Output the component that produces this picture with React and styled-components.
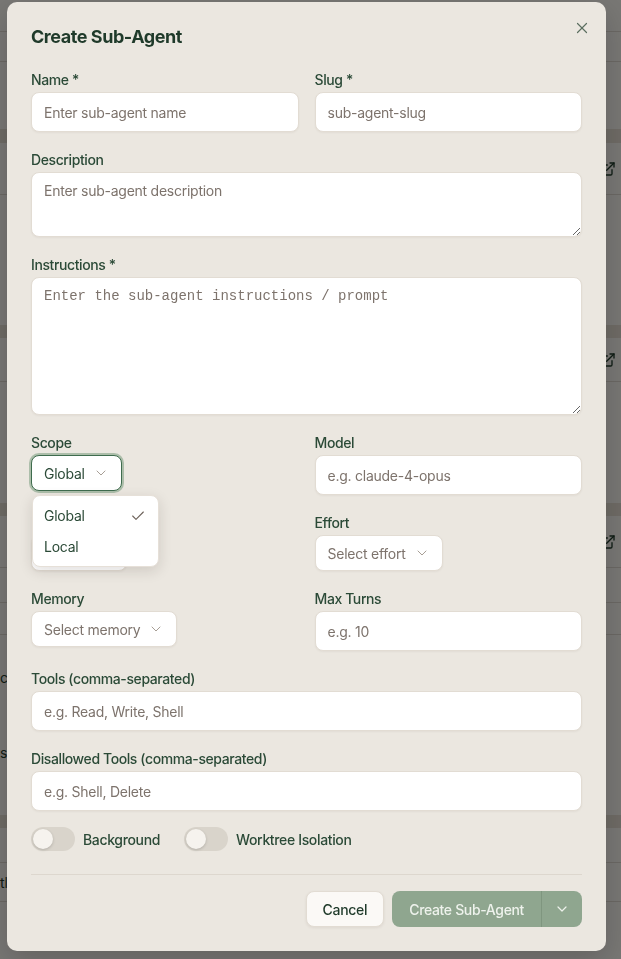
import React from 'react';
import styled, { createGlobalStyle, css } from 'styled-components';
import { X, ChevronDown, Check, ExternalLink } from 'lucide-react';

const GlobalStyle = createGlobalStyle`
  html, body {
    margin: 0;
    padding: 0;
    background: #f1eee9;
    font-family: Inter, "Noto Sans", "Liberation Sans", sans-serif;
  }
  * { box-sizing: border-box; }
`;

/* ---------- page behind the dialog ---------- */

const Page = styled.div`
  display: flex;
  flex-direction: column;
  min-height: 100vh;
`;

const PageRow = styled.div`
  height: ${p => p.$h}px;
  display: flex;
  align-items: center;
  justify-content: space-between;
  font-size: 14px;
  color: #1f3a2a;
  ${p => p.$line && css`border-bottom: 1px solid #d6d0c8;`}
  ${p => p.$band && css`background: #ddd6cb;`}
`;

const RowIcon = styled.span`
  display: flex;
  margin-right: 5px;
  color: #1f3a2a;
`;

const Overlay = styled.div`
  position: fixed;
  inset: 0;
  background: rgba(0, 0, 0, 0.5);
`;

/* ---------- dialog ---------- */

const Dialog = styled.div`
  position: fixed;
  top: 2px;
  left: 7px;
  width: 599px;
  padding: 24px;
  background: #ebe7e0;
  border-radius: 10px;
  box-shadow: 0 10px 30px rgba(0, 0, 0, 0.18);
  letter-spacing: -0.25px;
`;

const Title = styled.h2`
  margin: 0 0 23px;
  font-size: 18px;
  line-height: 21px;
  font-weight: 700;
  color: #1f3a2a;
  letter-spacing: -0.45px;
`;

const CloseButton = styled.button`
  position: absolute;
  top: 17px;
  right: 15px;
  width: 18px;
  height: 18px;
  padding: 0;
  border: 0;
  background: none;
  color: #5b6f60;
  display: flex;
  cursor: pointer;
`;

const Form = styled.div`
  display: flex;
  flex-direction: column;
  gap: 18px;
`;

const TwoCol = styled.div`
  display: grid;
  grid-template-columns: 1fr 1fr;
  column-gap: 16px;
  row-gap: 18px;
`;

const Field = styled.div`
  position: relative;
  display: flex;
  flex-direction: column;
  align-items: ${p => (p.$inline ? 'flex-start' : 'stretch')};
  gap: 2px;
`;

const Label = styled.label`
  font-size: 14px;
  line-height: 20px;
  font-weight: 500;
  color: #2b4a37;
  letter-spacing: -0.4px;
`;

const fieldBox = css`
  background: #fff;
  border: 1px solid #e2dcd3;
  border-radius: 8px;
  box-shadow: 0 1px 2px rgba(60, 40, 20, 0.05);
  font-family: inherit;
  font-size: 14px;
  letter-spacing: -0.25px;
  color: #2b4a37;
  outline: none;
  &::placeholder { color: #7d736c; }
`;

const Input = styled.input`
  ${fieldBox}
  height: 40px;
  width: 100%;
  padding: 0 12px;
`;

const TextArea = styled.textarea`
  ${fieldBox}
  display: block;
  width: 100%;
  height: ${p => p.$h}px;
  padding: 8px 12px;
  line-height: 20px;
  resize: vertical;
  ${p => p.$mono && css`
    font-family: "Liberation Mono", "DejaVu Sans Mono", monospace;
    letter-spacing: 0;
  `}
`;

const SelectTrigger = styled.button`
  ${fieldBox}
  height: 36px;
  display: inline-flex;
  align-items: center;
  gap: 8px;
  padding: 0 12px;
  color: ${p => (p.$value ? '#2b4a37' : '#7d736c')};
  cursor: pointer;
  svg { color: #a79e95; }
  ${p => p.$focused && css`
    border-color: #3f6c4e;
    box-shadow: 0 0 0 2px rgba(95, 140, 105, 0.45);
  `}
`;

const Menu = styled.div`
  position: absolute;
  top: 62px;
  left: 1px;
  width: 127px;
  padding: 4px;
  background: #fff;
  border: 1px solid #e6e0d8;
  border-radius: 8px;
  box-shadow: 0 4px 14px rgba(40, 30, 20, 0.14);
  z-index: 2;
`;

const MenuItem = styled.div`
  height: 31px;
  display: flex;
  align-items: center;
  justify-content: space-between;
  padding: 0 8px 0 7px;
  font-size: 14px;
  color: #2b4a37;
  svg { color: #6b6058; }
`;

const ToggleRow = styled.div`
  display: flex;
  align-items: center;
  gap: 24px;
  margin-top: -2px;
`;

const ToggleItem = styled.label`
  display: inline-flex;
  align-items: center;
  gap: 8px;
  font-size: 14px;
  font-weight: 500;
  letter-spacing: -0.35px;
  color: #2b4a37;
`;

const Switch = styled.span`
  width: 44px;
  height: 24px;
  padding: 2px;
  border-radius: 12px;
  background: ${p => (p.$on ? '#3f6c4e' : '#d9d4cb')};
  display: inline-flex;
  justify-content: ${p => (p.$on ? 'flex-end' : 'flex-start')};
  &::after {
    content: '';
    width: 20px;
    height: 20px;
    border-radius: 50%;
    background: #f6f3ee;
    box-shadow: 0 1px 3px rgba(0, 0, 0, 0.18);
  }
`;

const Footer = styled.div`
  margin-top: 23px;
  padding-top: 16px;
  border-top: 1px solid #ddd7ce;
  display: flex;
  justify-content: flex-end;
  gap: 8px;
`;

const Button = styled.button`
  height: 36px;
  padding: 0 16px;
  border-radius: 8px;
  font-family: inherit;
  font-size: 14px;
  font-weight: 500;
  letter-spacing: -0.3px;
  cursor: pointer;
  background: #fbf9f6;
  color: #1f3a2a;
  border: 1px solid #e2dcd3;
  box-shadow: 0 1px 3px rgba(60, 40, 20, 0.08);
`;

const SplitButton = styled.div`
  display: inline-flex;
  height: 36px;
  border-radius: 8px;
  overflow: hidden;
  background: #8fa68f;
`;

const SplitMain = styled.button`
  padding: 0 17px;
  border: 0;
  background: none;
  font-family: inherit;
  font-size: 14px;
  font-weight: 500;
  letter-spacing: -0.35px;
  color: #eef2ec;
`;

const SplitToggle = styled.button`
  width: 41px;
  border: 0;
  border-left: 1px solid #7f967f;
  background: none;
  color: #eef2ec;
  display: flex;
  align-items: center;
  justify-content: center;
`;

const bgRows = [
  { h: 32, line: true },
  { h: 30, line: true },
  { h: 67 },
  { h: 14, band: true },
  { h: 52, line: true, icon: true },
  { h: 130 },
  { h: 13, band: true },
  { h: 44, line: true, icon: true },
  { h: 121 },
  { h: 13, band: true },
  { h: 52, line: true, icon: true },
  { h: 35, line: true },
  { h: 32, line: true },
  { h: 24 },
  { h: 36, text: 'c' },
  { h: 40 },
  { h: 34, text: 's' },
  { h: 46 },
  { h: 13, band: true },
  { h: 35, line: true },
  { h: 39, line: true, text: 'tl' },
  { h: 57 },
];

const SelectBox = ({ children, value, focused }) => (
  <SelectTrigger type="button" $value={value} $focused={focused}>
    {children}
    <ChevronDown size={16} strokeWidth={1.5} />
  </SelectTrigger>
);

export default function App() {
  return (
    <>
      <GlobalStyle />
      <Page>
        {bgRows.map((r, i) => (
          <PageRow key={i} $h={r.h} $line={r.line} $band={r.band}>
            <span>{r.text || ''}</span>
            {r.icon && (
              <RowIcon>
                <ExternalLink size={16} strokeWidth={2} />
              </RowIcon>
            )}
          </PageRow>
        ))}
      </Page>
      <Overlay />

      <Dialog role="dialog">
        <CloseButton aria-label="Close">
          <X size={18} strokeWidth={1.6} />
        </CloseButton>
        <Title>Create Sub-Agent</Title>

        <Form>
          <TwoCol>
            <Field>
              <Label>Name *</Label>
              <Input placeholder="Enter sub-agent name" />
            </Field>
            <Field>
              <Label>Slug *</Label>
              <Input placeholder="sub-agent-slug" />
            </Field>
          </TwoCol>

          <Field>
            <Label>Description</Label>
            <TextArea $h={65} placeholder="Enter sub-agent description" />
          </Field>

          <Field>
            <Label>Instructions *</Label>
            <TextArea $h={138} $mono placeholder="Enter the sub-agent instructions / prompt" />
          </Field>

          <TwoCol>
            <Field $inline>
              <Label>Scope</Label>
              <SelectBox value focused>Global</SelectBox>
              <Menu>
                <MenuItem>
                  Global
                  <Check size={16} strokeWidth={1.6} />
                </MenuItem>
                <MenuItem>Local</MenuItem>
              </Menu>
            </Field>
            <Field>
              <Label>Model</Label>
              <Input placeholder="e.g. claude-4-opus" />
            </Field>

            <Field $inline>
              <Label>Mode</Label>
              <SelectBox>Default</SelectBox>
            </Field>
            <Field $inline>
              <Label>Effort</Label>
              <SelectBox>Select effort</SelectBox>
            </Field>

            <Field $inline>
              <Label>Memory</Label>
              <SelectBox>Select memory</SelectBox>
            </Field>
            <Field>
              <Label>Max Turns</Label>
              <Input placeholder="e.g. 10" />
            </Field>
          </TwoCol>

          <Field>
            <Label>Tools (comma-separated)</Label>
            <Input placeholder="e.g. Read, Write, Shell" />
          </Field>

          <Field>
            <Label>Disallowed Tools (comma-separated)</Label>
            <Input placeholder="e.g. Shell, Delete" />
          </Field>

          <ToggleRow>
            <ToggleItem>
              <Switch />
              Background
            </ToggleItem>
            <ToggleItem>
              <Switch />
              Worktree Isolation
            </ToggleItem>
          </ToggleRow>
        </Form>

        <Footer>
          <Button>Cancel</Button>
          <SplitButton>
            <SplitMain>Create Sub-Agent</SplitMain>
            <SplitToggle aria-label="More options">
              <ChevronDown size={16} strokeWidth={1.8} />
            </SplitToggle>
          </SplitButton>
        </Footer>
      </Dialog>
    </>
  );
}
